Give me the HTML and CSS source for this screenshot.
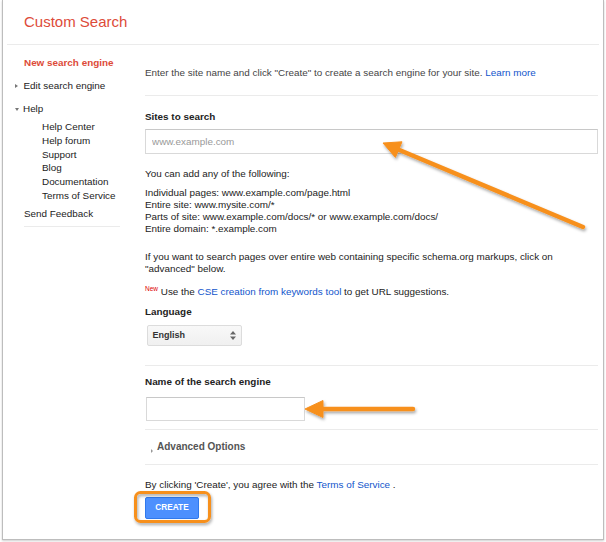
FILE: index.html
```html
<html>
<head>
<link rel="stylesheet" href="styles.css">
</head>
<body>
<div class="window">
  <div class="header">
    <span class="logo">Custom Search</span>
  </div>

  <div class="layout">
    <div class="sidebar">
      <div class="nav-item nav-item--active">New search engine</div>
      <div class="nav-item nav-item--closed">Edit search engine</div>
      <div class="nav-item nav-item--open">Help</div>
      <ul class="sub-nav">
        <li>Help Center</li>
        <li>Help forum</li>
        <li>Support</li>
        <li>Blog</li>
        <li>Documentation</li>
        <li>Terms of Service</li>
      </ul>
      <div class="nav-item nav-item--last">Send Feedback</div>
      <div class="sidebar__rule"></div>
    </div>

    <div class="main">
      <div class="section section--intro">
        Enter the site name and click "Create" to create a search engine for your site. <a href="#">Learn more</a>
      </div>

      <div class="section section--sites">
        <div class="field-label">Sites to search</div>
        <input class="text-input text-input--wide" type="text" placeholder="www.example.com">
        <p class="hint">You can add any of the following:</p>
        <p class="examples">
          Individual pages: www.example.com/page.html<br>
          Entire site: www.mysite.com/*<br>
          Parts of site: www.example.com/docs/* or www.example.com/docs/<br>
          Entire domain: *.example.com
        </p>
        <p class="examples examples--schema">If you want to search pages over entire web containing specific schema.org markups, click on "advanced" below.</p>
        <p class="hint hint--new"><sup class="badge-new">New</sup> Use the <a href="#">CSE creation from keywords tool</a> to get URL suggestions.</p>
        <div class="field-label field-label--lang">Language</div>
        <div class="select">
          <span>English</span>
          <svg width="6" height="9" viewBox="0 0 6 9"><path d="M3 0L6 3.4H0z M3 9L0 5.6H6z" fill="#666"/></svg>
        </div>
      </div>

      <div class="section section--name">
        <div class="field-label">Name of the search engine</div>
        <input class="text-input text-input--name" type="text">
      </div>

      <div class="section section--advanced">
        <span class="advanced">Advanced Options</span>
      </div>

      <div class="section section--submit">
        <p class="hint">By clicking 'Create', you agree with the <a href="#">Terms of Service</a> .</p>
        <button class="btn-create">CREATE</button>
      </div>
    </div>
  </div>
</div>

<!-- annotation arrows drawn over the screenshot -->
<svg class="annotations" width="606" height="542" viewBox="0 0 606 542">
  <defs>
    <filter id="shadow" x="-10%" y="-10%" width="130%" height="140%">
      <feDropShadow dx="1" dy="2" stdDeviation="1.4" flood-color="#000" flood-opacity="0.35"/>
    </filter>
  </defs>
  <g filter="url(#shadow)" fill="#f7901e" stroke="#f7901e">
    <line x1="583" y1="227" x2="397" y2="149" stroke-width="4.5" stroke-linecap="round"/>
    <polygon points="383,143 402,141.8 395.4,157.4" stroke-width="1" stroke-linejoin="round"/>
    <line x1="413" y1="409" x2="320" y2="409" stroke-width="4.5" stroke-linecap="round"/>
    <polygon points="305,409 323,400.5 323,417.5" stroke-width="1" stroke-linejoin="round"/>
    <rect x="135.5" y="492.5" width="74" height="29" rx="5" fill="none" stroke-width="3"/>
  </g>
</svg>
</body>
</html>
```

FILE: styles.css
```css
/* reset */
* {
  padding: 0;
  margin: 0;
}

body {
  background-color: #fff;
  font-family: "Liberation Sans", Arial, sans-serif;
  font-size: 9.9px;
  color: #222;
  position: relative;
  width: 606px;
  height: 542px;
  overflow: hidden;
}

a {
  color: #1155cc;
  text-decoration: none;
}

.window {
  margin-left: 2px;
  width: 600px;
  height: 539px;
  border: 1px solid #bdbdbd;
  border-top: 0;
  box-shadow: 0 1px 2px rgba(0, 0, 0, .2);
  background-color: #fff;
}

.header {
  margin: 0 4px;
  padding: 13px 0 13px 17px;
  border-bottom: 1px solid #ebebeb;
  line-height: 18px;
}

.logo {
  font-size: 15px;
  color: #dd4b39;
}

.layout {
  display: flex;
  margin: 0 5px 0 4px;
}

/* sidebar */
.sidebar {
  width: 138px;
  padding: 11px 0 0 17px;
  box-sizing: border-box;
  flex-shrink: 0;
}

.nav-item {
  line-height: 14px;
  margin-bottom: 9px;
  color: #222;
}

.nav-item--active {
  color: #dd4b39;
  font-weight: bold;
}

.nav-item--closed::before,
.nav-item--open::before {
  content: '';
  display: inline-block;
  width: 0;
  height: 0;
  border-style: solid;
  vertical-align: 1px;
}

.nav-item--closed::before {
  border-width: 2.5px 0 2.5px 3.5px;
  border-color: transparent transparent transparent #777;
  margin-left: -9px;
  margin-right: 5.5px;
}

.nav-item--open::before {
  border-width: 3.5px 2.5px 0 2.5px;
  border-color: #777 transparent transparent transparent;
  margin-left: -9.5px;
  margin-right: 4.5px;
}

.nav-item--open {
  margin-bottom: 4px;
}

.sub-nav {
  list-style: none;
  padding-left: 18px;
  line-height: 13.8px;
  margin-bottom: 4px;
}

.nav-item--last {
  margin-bottom: 5px;
}

.sidebar__rule {
  width: 96px;
  border-bottom: 1px solid #ebebeb;
}

/* main column */
.main {
  flex: 1;
}

.section {
  border-bottom: 1px solid #ebebeb;
}

.section--intro {
  padding: 21px 0 15px;
  line-height: 14px;
  color: #444;
}

.section--sites {
  padding: 14px 0 19px;
}

.field-label {
  font-weight: bold;
  line-height: 14px;
  color: #222;
}

.text-input {
  display: block;
  box-sizing: border-box;
  border: 1px solid #d9d9d9;
  border-top-color: #c8c8c8;
  padding: 0 6px;
  font-family: "Liberation Sans", Arial, sans-serif;
  font-size: 9.9px;
  color: #222;
  background-color: #fff;
  outline: none;
}

.text-input::placeholder {
  color: #999;
}

.text-input--wide {
  margin-top: 5px;
  width: 100%;
  height: 25px;
}

.hint {
  line-height: 14px;
  color: #222;
}

.section--sites .hint {
  margin-top: 13px;
}

.examples {
  margin-top: 5.5px;
  line-height: 12.3px;
  color: #222;
}

.examples--schema {
  margin-top: 15px;
  max-width: 430px;
}

.section--sites .hint--new {
  margin-top: 10px;
}

.badge-new {
  color: #dd0000;
  font-size: 6.5px;
  vertical-align: 4px;
  line-height: 0;
}

.field-label--lang {
  margin-top: 6px;
}

.select {
  margin: 5.5px 0 0 1.5px;
  width: 95px;
  height: 21px;
  box-sizing: border-box;
  border: 1px solid #dcdcdc;
  border-radius: 2px;
  background: linear-gradient(#f8f8f8, #f0f0f0);
  display: flex;
  align-items: center;
  justify-content: space-between;
  padding: 0 5px 0 5px;
  font-size: 9px;
  font-weight: bold;
  color: #333;
}

.section--name {
  padding: 9.5px 0 8px;
}

.text-input--name {
  margin: 8px 0 0 1px;
  width: 159px;
  height: 24px;
}

.section--advanced {
  padding: 10px 0 9.5px;
  line-height: 14px;
}

.advanced {
  font-weight: bold;
  font-size: 10px;
  color: #555;
}

.advanced::before {
  content: '';
  display: inline-block;
  width: 0;
  height: 0;
  border-style: solid;
  border-width: 2px 0 2px 2.5px;
  border-color: transparent transparent transparent #999;
  margin: 0 4.5px 0 5.5px;
  vertical-align: -3px;
}

.section--submit {
  border-bottom: 0;
  padding-top: 13px;
}

.btn-create {
  display: block;
  margin-top: 5px;
  width: 54px;
  height: 22px;
  background-color: #4d90fe;
  border: 1px solid #3079ed;
  border-radius: 2px;
  color: #fff;
  font-family: "Liberation Sans", Arial, sans-serif;
  font-size: 8.25px;
  font-weight: bold;
}

.annotations {
  position: absolute;
  top: 0;
  left: 0;
  pointer-events: none;
}
```
